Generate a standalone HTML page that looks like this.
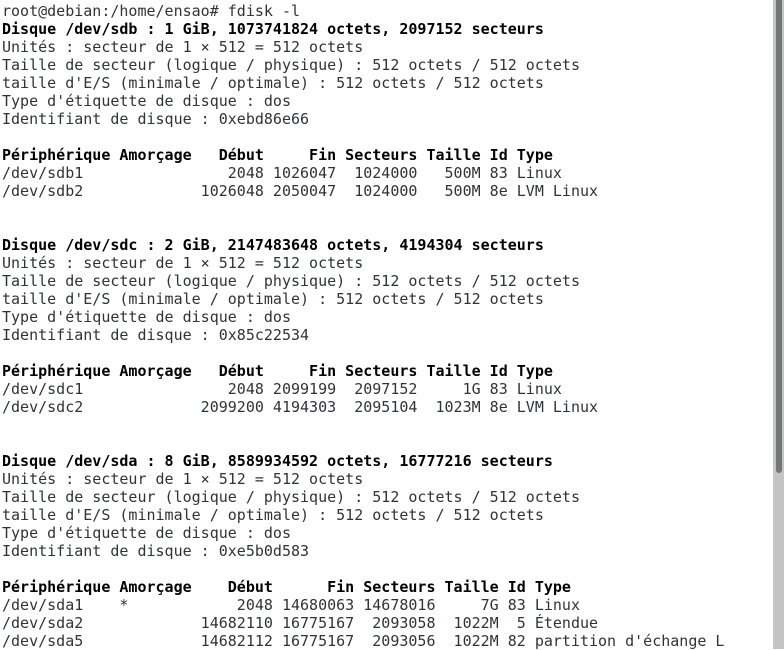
<!DOCTYPE html>
<html><head><meta charset="utf-8"><style>
html,body{margin:0;padding:0;background:#fff;width:784px;height:649px;overflow:hidden}
pre{margin:0;position:absolute;left:2px;top:2px;font-family:"DejaVu Sans Mono","Liberation Mono",monospace;font-size:15px;line-height:18px;color:#2e3436}
b{font-weight:bold;color:#000}
.tr{position:absolute;left:773px;top:0;width:11px;height:649px;background:#c3c4c3}
.th{position:absolute;left:776px;top:0;width:6px;height:473px;background:#727777;border-radius:0 0 3px 3px}
</style></head><body>
<pre>root@debian:/home/ensao# fdisk -l
<b>Disque /dev/sdb : 1 GiB, 1073741824 octets, 2097152 secteurs</b>
Unités : secteur de 1 × 512 = 512 octets
Taille de secteur (logique / physique) : 512 octets / 512 octets
taille d'E/S (minimale / optimale) : 512 octets / 512 octets
Type d'étiquette de disque : dos
Identifiant de disque : 0xebd86e66

<b>Périphérique Amorçage   Début     Fin Secteurs Taille Id Type</b>
/dev/sdb1                2048 1026047  1024000   500M 83 Linux
/dev/sdb2             1026048 2050047  1024000   500M 8e LVM Linux


<b>Disque /dev/sdc : 2 GiB, 2147483648 octets, 4194304 secteurs</b>
Unités : secteur de 1 × 512 = 512 octets
Taille de secteur (logique / physique) : 512 octets / 512 octets
taille d'E/S (minimale / optimale) : 512 octets / 512 octets
Type d'étiquette de disque : dos
Identifiant de disque : 0x85c22534

<b>Périphérique Amorçage   Début     Fin Secteurs Taille Id Type</b>
/dev/sdc1                2048 2099199  2097152     1G 83 Linux
/dev/sdc2             2099200 4194303  2095104  1023M 8e LVM Linux


<b>Disque /dev/sda : 8 GiB, 8589934592 octets, 16777216 secteurs</b>
Unités : secteur de 1 × 512 = 512 octets
Taille de secteur (logique / physique) : 512 octets / 512 octets
taille d'E/S (minimale / optimale) : 512 octets / 512 octets
Type d'étiquette de disque : dos
Identifiant de disque : 0xe5b0d583

<b>Périphérique Amorçage    Début      Fin Secteurs Taille Id Type</b>
/dev/sda1    *            2048 14680063 14678016     7G 83 Linux
/dev/sda2             14682110 16775167  2093058  1022M  5 Étendue
/dev/sda5             14682112 16775167  2093056  1022M 82 partition d'échange L</pre>
<div class="tr"></div><div class="th"></div>
</body></html>
